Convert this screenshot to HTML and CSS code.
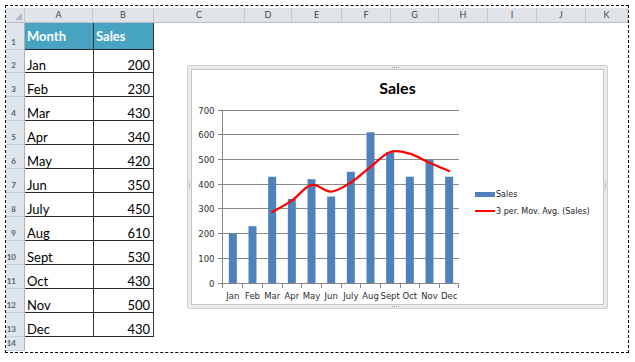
FILE: index.html
```html
<!DOCTYPE html>
<html>
<head>
<meta charset="utf-8">
<title>Sales</title>
<link rel="stylesheet" href="styles.css">
</head>
<body>
<div class="sheet">
  <div class="grid">
    <div class="corner"></div>
    <div class="colhead">A</div>
    <div class="colhead">B</div>
    <div class="colhead">C</div>
    <div class="colhead">D</div>
    <div class="colhead">E</div>
    <div class="colhead">F</div>
    <div class="colhead">G</div>
    <div class="colhead">H</div>
    <div class="colhead">I</div>
    <div class="colhead">J</div>
    <div class="colhead">K</div>

    <div class="rowhead">1</div><div class="cell th">Month</div><div class="cell th b">Sales</div>
    <div class="rowhead">2</div><div class="cell">Jan</div><div class="cell b">200</div>
    <div class="rowhead">3</div><div class="cell">Feb</div><div class="cell b">230</div>
    <div class="rowhead">4</div><div class="cell">Mar</div><div class="cell b">430</div>
    <div class="rowhead">5</div><div class="cell">Apr</div><div class="cell b">340</div>
    <div class="rowhead">6</div><div class="cell">May</div><div class="cell b">420</div>
    <div class="rowhead">7</div><div class="cell">Jun</div><div class="cell b">350</div>
    <div class="rowhead">8</div><div class="cell">July</div><div class="cell b">450</div>
    <div class="rowhead">9</div><div class="cell">Aug</div><div class="cell b">610</div>
    <div class="rowhead">10</div><div class="cell">Sept</div><div class="cell b">530</div>
    <div class="rowhead">11</div><div class="cell">Oct</div><div class="cell b">430</div>
    <div class="rowhead">12</div><div class="cell">Nov</div><div class="cell b">500</div>
    <div class="rowhead">13</div><div class="cell">Dec</div><div class="cell b">430</div>
    <div class="rowhead">14</div><div class="cell empty"></div><div class="cell empty"></div>

    <div class="area">
      <div class="chart">
        <span class="handle handle-top"></span>
        <span class="handle handle-bottom"></span>
        <span class="handle handle-left"></span>
        <span class="handle handle-right"></span>
        <div class="chart-inner">
          <div class="chart-title">Sales</div>
          <div class="chart-body">
            <svg class="plot" width="280" height="206" viewBox="0 0 280 206">
              <g class="grid-lines" shape-rendering="crispEdges">
                <line x1="31" y1="12.5" x2="267" y2="12.5"/>
                <line x1="31" y1="36.5" x2="267" y2="36.5"/>
                <line x1="31" y1="61.5" x2="267" y2="61.5"/>
                <line x1="31" y1="86.5" x2="267" y2="86.5"/>
                <line x1="31" y1="110.5" x2="267" y2="110.5"/>
                <line x1="31" y1="135.5" x2="267" y2="135.5"/>
                <line x1="31" y1="160.5" x2="267" y2="160.5"/>
              </g>
              <g class="bars">
                <rect x="36.83" y="135.57" width="8" height="49.43"/>
                <rect x="56.5" y="128.16" width="8" height="56.84"/>
                <rect x="76.17" y="78.73" width="8" height="106.27"/>
                <rect x="95.83" y="100.97" width="8" height="84.03"/>
                <rect x="115.5" y="81.2" width="8" height="103.8"/>
                <rect x="135.17" y="98.5" width="8" height="86.5"/>
                <rect x="154.83" y="73.79" width="8" height="111.21"/>
                <rect x="174.5" y="34.24" width="8" height="150.76"/>
                <rect x="194.17" y="54.02" width="8" height="130.98"/>
                <rect x="213.83" y="78.73" width="8" height="106.27"/>
                <rect x="233.5" y="61.43" width="8" height="123.57"/>
                <rect x="253.17" y="78.73" width="8" height="106.27"/>
              </g>
              <g class="axis" shape-rendering="crispEdges">
                <line x1="30.5" y1="12" x2="30.5" y2="185.5"/>
                <line x1="30.5" y1="185.5" x2="267" y2="185.5"/>
                <line x1="26" y1="12.5" x2="31" y2="12.5"/>
                <line x1="26" y1="36.5" x2="31" y2="36.5"/>
                <line x1="26" y1="61.5" x2="31" y2="61.5"/>
                <line x1="26" y1="86.5" x2="31" y2="86.5"/>
                <line x1="26" y1="110.5" x2="31" y2="110.5"/>
                <line x1="26" y1="135.5" x2="31" y2="135.5"/>
                <line x1="26" y1="160.5" x2="31" y2="160.5"/>
                <line x1="26" y1="185.5" x2="31" y2="185.5"/>
                <line x1="30.5" y1="185" x2="30.5" y2="190"/>
                <line x1="50.67" y1="185" x2="50.67" y2="190"/>
                <line x1="70.33" y1="185" x2="70.33" y2="190"/>
                <line x1="90" y1="185" x2="90" y2="190"/>
                <line x1="109.67" y1="185" x2="109.67" y2="190"/>
                <line x1="129.33" y1="185" x2="129.33" y2="190"/>
                <line x1="149" y1="185" x2="149" y2="190"/>
                <line x1="168.67" y1="185" x2="168.67" y2="190"/>
                <line x1="188.33" y1="185" x2="188.33" y2="190"/>
                <line x1="208" y1="185" x2="208" y2="190"/>
                <line x1="227.67" y1="185" x2="227.67" y2="190"/>
                <line x1="247.33" y1="185" x2="247.33" y2="190"/>
                <line x1="266.5" y1="185" x2="266.5" y2="190"/>
              </g>
              <path class="avg" d="M80.17 114.15 C83.45 112.23 93.28 107.15 99.83 102.62 C106.39 98.09 112.94 88.48 119.5 86.97 C126.06 85.46 132.61 93.97 139.17 93.56 C145.72 93.15 152.28 88.62 158.83 84.5 C165.39 80.38 171.94 73.92 178.5 68.84 C185.06 63.76 191.61 56.22 198.17 54.02 C204.72 51.82 211.28 53.88 217.83 55.66 C224.39 57.44 230.94 61.84 237.5 64.72 C244.06 67.6 253.89 71.59 257.17 72.96"/>
              <g class="ylabels">
                <text x="22.5" y="15.5">700</text>
                <text x="22.5" y="39.5">600</text>
                <text x="22.5" y="64.5">500</text>
                <text x="22.5" y="89.5">400</text>
                <text x="22.5" y="113.5">300</text>
                <text x="22.5" y="138.5">200</text>
                <text x="22.5" y="163.5">100</text>
                <text x="22.5" y="188.5">0</text>
              </g>
              <g class="xlabels">
                <text x="40.83" y="200.5">Jan</text>
                <text x="60.5" y="200.5">Feb</text>
                <text x="80.17" y="200.5">Mar</text>
                <text x="99.83" y="200.5">Apr</text>
                <text x="119.5" y="200.5">May</text>
                <text x="139.17" y="200.5">Jun</text>
                <text x="158.83" y="200.5">July</text>
                <text x="178.5" y="200.5">Aug</text>
                <text x="198.17" y="200.5">Sept</text>
                <text x="217.83" y="200.5">Oct</text>
                <text x="237.5" y="200.5">Nov</text>
                <text x="257.17" y="200.5">Dec</text>
              </g>
            </svg>
            <ul class="legend">
              <li><span class="key key-bar"></span><span>Sales</span></li>
              <li><span class="key key-line"></span><span>3 per. Mov. Avg. (Sales)</span></li>
            </ul>
          </div>
        </div>
      </div>
    </div>
  </div>
</div>
</body>
</html>
```
FILE: styles.css
```css
body {
  margin: 0;
  background: #fff;
  font-family: Lato, "Open Sans", sans-serif;
}

.sheet {
  margin: 5px 0 0 5px;
  width: 622px;
  height: 346px;
  border: 1px dashed #000;
  overflow: hidden;
}

.grid {
  display: grid;
  grid-template-columns: 19px 68px 61px 91px 47px 50px 49px 48px 49px 49px 49px 42px;
  grid-template-rows: 15px 27px 23px repeat(11, 24px) 14px;
  padding-top: 2px;
}

.corner,
.colhead {
  background: #e0e4e9;
  border-right: 1px solid #c4cad2;
  border-bottom: 1px solid #b9c0c9;
  box-sizing: border-box;
}

.corner {
  position: relative;
}

.corner::after {
  content: "";
  position: absolute;
  right: 2px;
  bottom: 2px;
  width: 0;
  height: 0;
  border-left: 7px solid transparent;
  border-bottom: 7px solid #b2b9c1;
}

.colhead {
  font-family: Lato, sans-serif;
  font-size: 9px;
  line-height: 14px;
  text-align: center;
  color: #3f4650;
}

.rowhead {
  background: #e0e5eb;
  border-right: 1px solid #aab2bc;
  border-bottom: 1px solid #c8ced6;
  box-sizing: border-box;
  display: flex;
  align-items: flex-end;
  justify-content: flex-end;
  padding: 0 8px 2px 0;
  font-family: Lato, sans-serif;
  font-weight: 700;
  font-size: 8px;
  line-height: 10px;
  color: #56606c;
}

.cell {
  display: flex;
  align-items: flex-end;
  box-sizing: border-box;
  padding: 0 3px 0 2px;
  border-bottom: 1px solid #2a2a2a;
  font-size: 13px;
  line-height: 14px;
  color: #000;
}

.cell.b {
  justify-content: flex-end;
  border-left: 1px solid #333;
  border-right: 1px solid #333;
}

.cell.th {
  background: #47a4c3;
  color: #fff;
  font-weight: 700;
  padding-bottom: 6px;
}

.cell.th.b {
  justify-content: flex-start;
  padding-left: 2px;
}

.cell.empty {
  border: none;
}

.area {
  grid-column: 4 / -1;
  grid-row: 2 / -1;
  position: relative;
}

.chart {
  position: absolute;
  left: 33px;
  top: 42px;
  width: 421px;
  height: 244px;
  box-sizing: border-box;
  border: 1px solid #d0d0d0;
  border-radius: 2px;
  padding: 3px;
  background: #ebebeb;
}

.handle {
  position: absolute;
}

.handle-top,
.handle-bottom {
  left: 204px;
  width: 8px;
  height: 1px;
  background: repeating-linear-gradient(90deg, #9a9a9a 0 1px, transparent 1px 2px);
}

.handle-top { top: 1px; }
.handle-bottom { bottom: 1px; }

.handle-left,
.handle-right {
  top: 116px;
  width: 1px;
  height: 8px;
  background: repeating-linear-gradient(180deg, #9a9a9a 0 1px, transparent 1px 2px);
}

.handle-left { left: 1px; }
.handle-right { right: 1px; }

.chart-inner {
  height: 100%;
  box-sizing: border-box;
  border: 1px solid #c6c6c6;
  background: #fff;
  display: flex;
  flex-direction: column;
}

.chart-title {
  margin-top: 8px;
  font-family: Lato, sans-serif;
  font-weight: 700;
  font-size: 16px;
  line-height: 20px;
  text-align: center;
  color: #000;
}

.chart-body {
  flex: 1;
  display: flex;
  align-items: center;
}

.plot {
  display: block;
  flex: none;
}

.grid-lines line {
  stroke: #8a8a8a;
  stroke-width: 1;
}

.axis line {
  stroke: #868686;
  stroke-width: 1;
}

.bars rect {
  fill: #4f81bd;
}

.avg {
  fill: none;
  stroke: #ff0000;
  stroke-width: 2.25;
  stroke-linejoin: round;
  stroke-linecap: round;
}

.ylabels text,
.xlabels text {
  font-family: "DejaVu Sans", sans-serif;
  font-size: 8.5px;
  fill: #2e2e2e;
}

.ylabels text { text-anchor: end; }
.xlabels text { text-anchor: middle; }

.legend {
  list-style: none;
  margin: 0;
  padding: 3px 0 0 3px;
  font-family: "DejaVu Sans", sans-serif;
  font-size: 8px;
  color: #222;
}

.legend li {
  display: flex;
  align-items: center;
  gap: 1px;
  height: 17px;
}

.key {
  flex: none;
  width: 20px;
}

.key-bar {
  height: 5px;
  background: #4f81bd;
}

.key-line {
  height: 2px;
  background: #ff0000;
}
```
